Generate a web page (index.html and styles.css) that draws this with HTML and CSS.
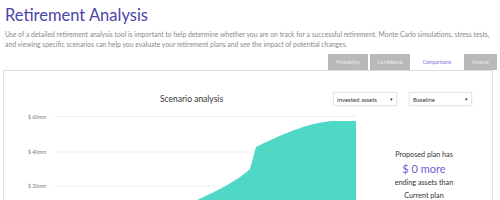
FILE: index.html
```html
<!DOCTYPE html>
<html>
<head>
<meta charset="utf-8">
<link rel="stylesheet" href="styles.css">
</head>
<body>
<div class="page">
  <h1 class="title">Retirement Analysis</h1>
  <p class="intro">Use of a detailed retirement analysis tool is important to help determine whether you are on track for a successful retirement. Monte Carlo simulations, stress tests, and viewing specific scenarios can help you evaluate your retirement plans and see the impact of potential changes.</p>
  <div class="tabs">
    <div class="tab">Probability</div>
    <div class="tab">Confidence</div>
    <div class="tab active">Comparisons</div>
    <div class="tab">Income</div>
  </div>
  <div class="panel">
    <div class="panel-head">
      <div class="chart-title">Scenario analysis</div>
      <div class="selects">
        <div class="select sel-assets"><span>Invested assets</span><span class="caret">▾</span></div>
        <div class="select sel-base"><span>Baseline</span><span class="caret">▾</span></div>
      </div>
    </div>
    <div class="panel-body">
      <div class="chart">
        <svg width="352" height="92" viewBox="0 0 352 92">
          <line x1="51" y1="7.5" x2="352" y2="7.5" class="grid"/>
          <line x1="51" y1="43" x2="352" y2="43" class="grid"/>
          <line x1="51" y1="77" x2="352" y2="77" class="grid"/>
          <text x="24" y="9.5" class="axis">$ 60mm</text>
          <text x="24" y="45" class="axis">$ 40mm</text>
          <text x="24" y="79" class="axis">$ 20mm</text>
          <path class="area" d="M191,92 C213,82 233,72 246,60 L252,38 C285,22 308,13 330,12 L352,12 L352,100 L191,100 Z"/>
        </svg>
      </div>
      <div class="info">
        <div class="info-line">Proposed plan has</div>
        <div class="info-amount">$ 0 more</div>
        <div class="info-line">ending assets than</div>
        <div class="info-line">Current plan</div>
      </div>
    </div>
  </div>
</div>
</body>
</html>
```
FILE: styles.css
```css
html, body {
  margin: 0;
  padding: 0;
  background: #ffffff;
  overflow: hidden;
}
body {
  font-family: Lato, "Noto Sans", sans-serif;
  width: 500px;
  height: 200px;
}
.page {
  padding: 0 3px;
}
.title {
  margin: 0;
  padding: 4px 0 0 2px;
  font-size: 16.5px;
  line-height: 22px;
  font-weight: 400;
  color: #4a45a8;
}
.intro {
  margin: 3px 0 0 2px;
  font-size: 6.8px;
  line-height: 10px;
  color: #8a8a8a;
}
.tabs {
  display: flex;
  justify-content: flex-end;
  gap: 2px;
  margin-top: 5px;
  height: 16px;
}
.tab {
  background: #b9b9b9;
  color: #ececec;
  font-size: 5px;
  display: flex;
  align-items: center;
  justify-content: center;
  width: 40px;
}
.tab.active {
  background: #ffffff;
  color: #7a6ee0;
  width: 50px;
}
.tab:last-child {
  width: 33px;
}
.panel {
  border: 1px solid #dedede;
  margin-right: 4px;
  height: 140px;
}
.panel-head {
  display: flex;
  align-items: center;
  margin-top: 21px;
  height: 14px;
}
.chart-title {
  margin-left: 156px;
  font-size: 8.5px;
  color: #333333;
}
.selects {
  margin-left: auto;
  margin-right: 20px;
  display: flex;
  gap: 12px;
}
.select {
  height: 14px;
  box-sizing: border-box;
  border: 1px solid #e6e6e6;
  box-shadow: 0 0 1px #e0e0e0;
  display: flex;
  align-items: center;
  justify-content: space-between;
  padding: 0 3px 0 3px;
  font-size: 6px;
  color: #333333;
}
.sel-assets { width: 64px; }
.sel-base { width: 63px; }
.caret {
  font-size: 5px;
}
.panel-body {
  display: flex;
  margin-top: 3px;
}
.chart {
  width: 352px;
  height: 92px;
}
.chart svg {
  display: block;
}
.grid {
  stroke: #f1f1f1;
  stroke-width: 1;
}
.axis {
  font-family: Lato, "Noto Sans", sans-serif;
  font-size: 5px;
  fill: #777777;
}
.area {
  fill: #4fd8c6;
}
.info {
  flex: 1;
  text-align: center;
  padding-top: 39px;
  color: #333333;
}
.info-line {
  font-size: 7.2px;
  line-height: 13px;
}
.info-amount {
  font-size: 11px;
  line-height: 15px;
  color: #6c60d8;
}
```
